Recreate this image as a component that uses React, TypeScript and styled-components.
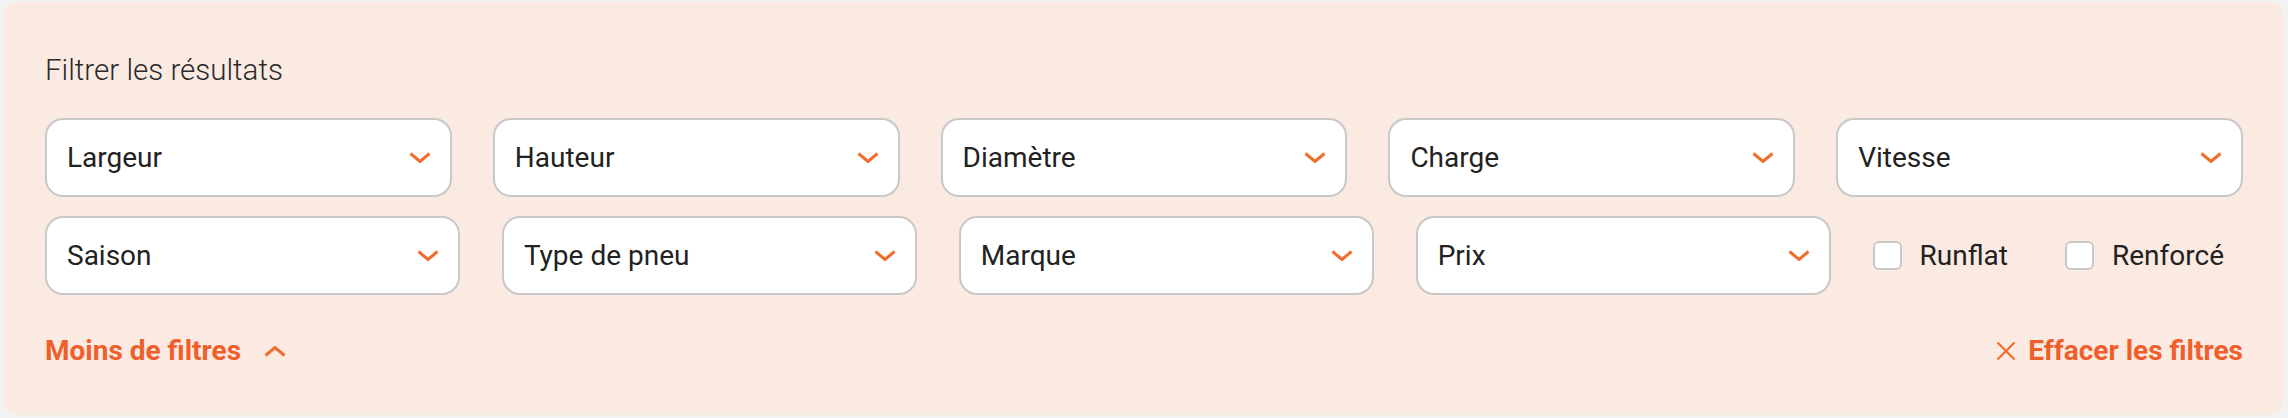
import React from "react";
import styled, { createGlobalStyle } from "styled-components";

const Global = createGlobalStyle`
  html, body { margin: 0; padding: 0; background: #f2f2f2; }
  body { font-family: Roboto, "Noto Sans", "Liberation Sans", sans-serif; }
  * { box-sizing: border-box; }
`;

const ORANGE = "#ef5f2b";
const CHEVRON = "#f26c2c";

const Panel = styled.section`
  margin: 2px 5px 3px 4px;
  padding: 52px 40px 48px 41px;
  background: #fbeae2;
  border-radius: 14px;
  display: flex;
  flex-direction: column;
`;

const Title = styled.h2`
  margin: 0 0 32px;
  font-size: 29.5px;
  line-height: 32px;
  font-weight: 300;
  color: #2b2b2b;
`;

const RowFive = styled.div`
  display: grid;
  grid-template-columns: repeat(5, 1fr);
  gap: 41px;
  margin-bottom: 19px;
`;

const RowMixed = styled.div`
  display: flex;
  align-items: center;
  gap: 42px;
`;

const Select = styled.button<{ $grow?: boolean }>`
  flex: ${(p) => (p.$grow ? "1 1 0" : "initial")};
  min-width: 0;
  height: 79px;
  display: flex;
  align-items: center;
  justify-content: space-between;
  padding: 0 19px 0 20px;
  background: #fff;
  border: 2px solid #c8c8c8;
  border-radius: 18px;
  font-family: inherit;
  font-size: 28px;
  font-weight: 400;
  color: #222;
  text-align: left;
  cursor: pointer;
`;

const Checks = styled.div`
  display: flex;
  align-items: center;
  gap: 57px;
  padding-right: 19px;
`;

const CheckLabel = styled.label`
  display: flex;
  align-items: center;
  gap: 18px;
  font-size: 28px;
  line-height: 32px;
  color: #222;
  cursor: pointer;
`;

const Box = styled.span`
  width: 29px;
  height: 29px;
  border: 2px solid #c8c8c8;
  border-radius: 6px;
  background: #fff;
  display: inline-block;
`;

const Footer = styled.div`
  margin-top: 40px;
  display: flex;
  align-items: center;
  justify-content: space-between;
`;

const LinkButton = styled.button`
  display: flex;
  align-items: center;
  gap: 23px;
  padding: 0;
  border: 0;
  background: none;
  font-family: inherit;
  font-size: 28px;
  line-height: 32px;
  font-weight: 700;
  color: ${ORANGE};
  cursor: pointer;
`;

const ClearButton = styled(LinkButton)`
  gap: 12px;
`;

const Chevron = ({ up = false }: { up?: boolean }) => (
  <svg width="22" height="11" viewBox="0 0 22 11" style={{ flex: "none" }}>
    <polyline
      points={up ? "1.5,9.5 11,1.5 20.5,9.5" : "1.5,1.5 11,9.5 20.5,1.5"}
      fill="none"
      stroke={CHEVRON}
      strokeWidth="3"
    />
  </svg>
);

const Cross = () => (
  <svg width="20" height="20" viewBox="0 0 20 20" style={{ flex: "none" }}>
    <path d="M1.5 1.5 L18.5 18.5 M18.5 1.5 L1.5 18.5" stroke={CHEVRON} strokeWidth="2.2" fill="none" />
  </svg>
);

const rowOne = ["Largeur", "Hauteur", "Diamètre", "Charge", "Vitesse"];
const rowTwo = ["Saison", "Type de pneu", "Marque", "Prix"];

export default function App() {
  return (
    <>
      <Global />
      <Panel>
        <Title>Filtrer les résultats</Title>
        <RowFive>
          {rowOne.map((l) => (
            <Select key={l}>
              <span>{l}</span>
              <Chevron />
            </Select>
          ))}
        </RowFive>
        <RowMixed>
          {rowTwo.map((l) => (
            <Select key={l} $grow>
              <span>{l}</span>
              <Chevron />
            </Select>
          ))}
          <Checks>
            <CheckLabel>
              <Box />
              Runflat
            </CheckLabel>
            <CheckLabel>
              <Box />
              Renforcé
            </CheckLabel>
          </Checks>
        </RowMixed>
        <Footer>
          <LinkButton>
            Moins de filtres
            <Chevron up />
          </LinkButton>
          <ClearButton>
            <Cross />
            Effacer les filtres
          </ClearButton>
        </Footer>
      </Panel>
    </>
  );
}
